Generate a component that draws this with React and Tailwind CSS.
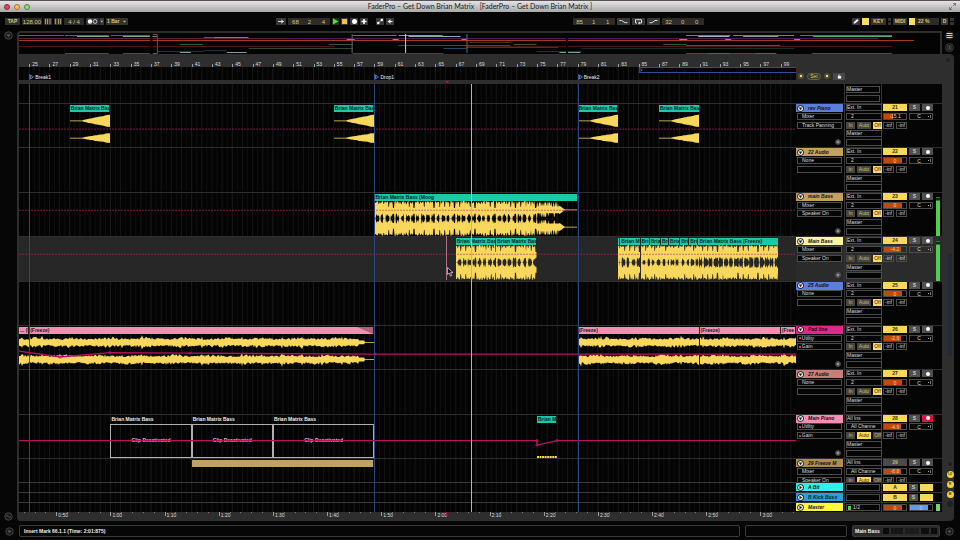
import React, { useState } from "react";
import clsx from "clsx";

const FIRST_BAR = 24;
const VISIBLE_BARS = 76.5;

function pos(bar) {
  return ((bar - FIRST_BAR) / VISIBLE_BARS) * 100 + "%";
}
function span(from, to) {
  return ((to - from) / VISIBLE_BARS) * 100 + "%";
}

function noise(i, seed) {
  const v = Math.sin(i * 12.9898 + seed * 78.233) * 43758.5453;
  return v - Math.floor(v);
}

// outline of one channel: up[] above the centre line, down[] below it
function outline(center, up, down, step) {
  const top = up.map((a, i) => `${(i * step).toFixed(1)},${(center - a).toFixed(1)}`);
  const bottom = down.map((a, i) => `${(i * step).toFixed(1)},${(center + a).toFixed(1)}`);
  return top.concat(bottom.reverse()).join(" ");
}

function swellWave(width) {
  const n = Math.floor(width);
  const make = (max) =>
    Array.from({ length: n + 1 }, (_, i) => {
      const t = i / n;
      return 0.4 + max * Math.pow(Math.max(0, t - 0.3) / 0.7, 0.9) * (0.85 + noise(i, 2) * 0.15);
    });
  return [outline(9, make(6.4), make(6.4), 1), outline(26.5, make(5), make(5), 1)];
}

function bassWave(width, seed, tail, sparse) {
  const n = Math.floor(width * 2);
  const outer = [];
  const inner = [];
  for (let i = 0; i <= n; i++) {
    const x = i / 2;
    const beat = x % 5.08;
    const phrase = x % 20.3;
    const k = Math.floor(x / 5.08);
    let o = 7.4 + noise(Math.floor(i / 2), seed) * 1.6;
    let n2 = 8.8;
    if (beat > 1.4 && beat < 2.1) {
      o = 5.6 + noise(k, seed + 7) * 2;
    }
    if (beat > (sparse ? 0.6 : 1.6) && beat < 4.2) {
      n2 = (sparse ? 2.6 : 3.6) + noise(i, seed + 4) * (sparse ? 3.4 : 3.8);
    }
    if (beat > 4.2) {
      o = noise(k, seed + 1) > 0.35 ? 3 : 6;
      n2 = noise(k, seed + 5) > 0.5 ? 8.8 : 6;
    }
    if (phrase > 18.8) {
      o = 1.8;
      n2 = 4;
    }
    if (tail && x > width - tail) {
      const t = (x - (width - tail)) / tail;
      o = t < 0.3 ? 4 * (1 - t / 0.3) + 0.5 : 0.4;
      n2 = o;
    } else if (tail && x > width - 40) {
      o = noise(i, seed) > 0.45 ? 7.5 : 3.5;
      n2 = noise(i, seed + 2) > 0.35 ? 3.5 : 7;
    }
    outer.push(o);
    inner.push(n2);
  }
  return [outline(9, outer, inner, 0.5), outline(26.5, inner, outer, 0.5)];
}

function padWave(width, seed, tail) {
  const n = Math.floor(width);
  const make = (s) =>
    Array.from({ length: n + 1 }, (_, i) => {
      if (tail && i > n - 10) return 0.4;
      if (tail && i > n - 16) return 2;
      const swell = 0.75 + 0.25 * Math.sin(i / 6 + s);
      const peak = i % 20 === 3 && noise(i, 9) > 0.5 ? 2.2 : 0;
      return 2.5 + swell * noise(i, s) * 3.2 + peak;
    });
  return [
    outline(8.5, make(seed), make(seed + 1), 1),
    outline(26, make(seed + 2), make(seed + 3), 1),
  ];
}

const TEAL = "bg-[#1bc8a8]";
const PINK = "bg-[#f48fb1]";

const tracks = [
  {
    id: 21,
    name: "rev Piano",
    color: "bg-[#5b7fdc]",
    device: "Mixer",
    param: "Track Panning",
    vol: "-15.1",
    fill: "w-2/5",
    add: true,
    dashed: 25.5,
    clips: [
      { from: 29, to: 33, label: "Brian Matrix Bas", color: TEAL, wave: "swell" },
      { from: 55, to: 59, label: "Brian Matrix Bas", color: TEAL, wave: "swell" },
      { from: 79, to: 83, label: "Brian Matrix Bas", color: TEAL, wave: "swell" },
      { from: 87, to: 91, label: "Brian Matrix Bas", color: TEAL, wave: "swell" },
    ],
  },
  { id: 22, name: "22 Audio", color: "bg-[#c4a05e]", device: "None", param: "", vol: "0", fill: "w-5/6", clips: [] },
  {
    id: 23,
    name: "main Bass",
    color: "bg-[#c4a05e]",
    device: "Mixer",
    param: "Speaker On",
    vol: "0",
    fill: "w-5/6",
    add: true,
    meter: true,
    dashed: 17.5,
    clips: [{ from: 59, to: 79, label: "Brian Matrix Bass (Moog", color: TEAL, wave: "bass", tail: 18 }],
  },
  {
    id: 24,
    name: "Main Bass",
    color: "bg-[#fdf3a0]",
    device: "Mixer",
    param: "Speaker On",
    vol: "-4.2",
    fill: "w-3/4",
    add: true,
    meter: true,
    selected: true,
    dashed: 17.5,
    clips: [
      { from: 67, to: 71, label: "Brian Matrix Bas", color: TEAL, wave: "bass" },
      { from: 71, to: 75, label: "Brian Matrix Bas", color: TEAL, wave: "bass" },
      { from: 83, to: 83.2, label: "", color: TEAL, wave: "bass" },
      { from: 83.2, to: 85.2, label: "Brian M", color: TEAL, wave: "bass" },
      { from: 85.2, to: 86.1, label: "Bri", color: TEAL, wave: "bass" },
      { from: 86.1, to: 87.2, label: "Bria", color: TEAL, wave: "bass" },
      { from: 87.2, to: 88, label: "Bri", color: TEAL, wave: "bass" },
      { from: 88, to: 89.1, label: "Bria", color: TEAL, wave: "bass" },
      { from: 89.1, to: 90, label: "Bri", color: TEAL, wave: "bass" },
      { from: 90, to: 90.9, label: "Bri", color: TEAL, wave: "bass" },
      { from: 90.9, to: 98.8, label: "Brian Matrix Bass (Freeze)", color: TEAL, wave: "bass", sparse: true },
    ],
  },
  { id: 25, name: "25 Audio", color: "bg-[#5b7fdc]", device: "None", param: "", vol: "0", fill: "w-5/6", clips: [] },
  {
    id: 26,
    name: "Pad line",
    color: "bg-[#e0278a]",
    device: "Utility",
    param: "Gain",
    automated: true,
    vol: "-2.9",
    fill: "w-3/4",
    add: true,
    line: [[0, 25.5], [41, 31.5], [91, 27], [171, 27.5], [356, 28.5], [777, 28.5]],
    clips: [
      { from: 24, to: 25, label: "... (F", color: PINK },
      { from: 25, to: 59, label: "(Freeze)", color: PINK, fade: true },
      { from: 24, to: 59, color: null, wave: "pad", tail: 10 },
      { from: 79, to: 91, label: "(Freeze)", color: PINK, wave: "pad" },
      { from: 91, to: 99, label: "(Freeze)", color: PINK, wave: "pad" },
      { from: 99, to: 100.5, label: "(Free", color: PINK, wave: "pad" },
    ],
  },
  { id: 27, name: "27 Audio", color: "bg-[#c97f77]", device: "None", param: "", vol: "0", fill: "w-5/6", clips: [] },
  {
    id: 28,
    name: "Main Piano",
    color: "bg-[#f48fb1]",
    device: "Utility",
    param: "Gain",
    automated: true,
    midi: true,
    armed: true,
    vol: "-4.9",
    fill: "w-3/4",
    add: true,
    line: [[0, 26], [518, 26], [518, 30.5], [538, 26], [777, 26]],
    clips: [
      { from: 33, to: 41, label: "Brian Matrix Bass", off: true },
      { from: 41, to: 49, label: "Brian Matrix Bass", off: true },
      { from: 49, to: 59, label: "Brian Matrix Bass", off: true },
      { from: 75, to: 77, label: "Brian M", color: TEAL, wave: "notes" },
    ],
  },
];

const freezeTrack = {
  id: 29,
  name: "29 Freeze M",
  color: "bg-[#b08c4c]",
  device: "Mixer",
  param: "Speaker On",
  midi: true,
  muted: true,
  vol: "-8.8",
  fill: "w-3/4",
  clips: [{ from: 41, to: 59, label: "", color: "bg-[#c3a067]" }],
};

const locators = [
  { bar: 25, name: "Break1" },
  { bar: 59, name: "Drop1" },
  { bar: 79, name: "Break2" },
];

function GridLines() {
  const lines = [];
  for (let b = 24.5; b < 100.5; b += 0.5) lines.push(b);
  return (
    <svg className="absolute inset-0 h-full w-full" aria-hidden="true">
      {lines.map((b) => (
        <line
          key={b}
          x1={pos(b)}
          x2={pos(b)}
          y1="0"
          y2="100%"
          stroke={b % 4 === 1 ? "#1c1c1c" : b % 1 === 0 ? "#161616" : "#0f0f0f"}
        />
      ))}
    </svg>
  );
}

function Wave({ clip }) {
  const width = (clip.to - clip.from) * 10.157;
  if (clip.wave === "notes") {
    return (
      <svg className="h-full w-full" viewBox="0 0 20 36" preserveAspectRatio="none">
        <path d="M0 34.5H20" stroke="#f7d75c" strokeWidth="2" strokeDasharray="2 .5" />
      </svg>
    );
  }
  let shapes = [];
  if (clip.wave === "swell") shapes = swellWave(width);
  if (clip.wave === "bass") shapes = bassWave(width, clip.from, clip.tail, clip.sparse);
  if (clip.wave === "pad") shapes = padWave(width, clip.from, clip.tail);
  return (
    <svg className="h-full w-full" viewBox={`0 0 ${width} 36`} preserveAspectRatio="none">
      {shapes.map((points, i) => (
        <polygon key={i} points={points} fill="#f7d75c" />
      ))}
    </svg>
  );
}

function Clip({ clip }) {
  return (
    <div
      className="absolute inset-y-0 flex flex-col pt-px"
      style={{ left: pos(clip.from), width: span(clip.from, clip.to) }}
    >
      <div
        className={clsx(
          "relative h-[7px] shrink-0 overflow-hidden whitespace-nowrap pl-px text-[5px] leading-[7px] font-bold",
          clip.color,
          clip.off ? "text-[#f0f0f0]" : "text-[#06251f]",
          clip.color && "border-r border-[#222]"
        )}
      >
        {clip.label}
        {clip.fade && (
          <svg className="absolute right-0 top-0 h-full w-4" viewBox="0 0 16 7" preserveAspectRatio="none">
            <path d="M0 0H16V7Z" fill="#b0607c" />
          </svg>
        )}
      </div>
      {clip.off ? (
        <div className="mt-px flex flex-1 items-center justify-center border border-[#b0b0b0] text-[5px] leading-none font-bold text-[#d9c4d0]">
          Clip Deactivated
        </div>
      ) : (
        <div className="min-h-0 flex-1">{clip.wave && <Wave clip={clip} />}</div>
      )}
    </div>
  );
}

function Lane({ track }) {
  return (
    <div
      className={clsx(
        "relative min-w-0 flex-1 overflow-hidden border-t border-[#2e2e2e]",
        track.selected ? "bg-[#272727]" : "bg-[#040404]"
      )}
    >
      {!track.selected && <GridLines />}
      {track.clips.map((c, i) => (
        <Clip key={i} clip={c} />
      ))}
      <svg className="absolute inset-0 h-full w-full" viewBox="0 0 777 44" preserveAspectRatio="none">
        {track.dashed && (
          <path
            d={`M0 ${track.dashed}H777`}
            stroke="#c4246a"
            strokeOpacity="0.6"
            strokeDasharray="2 1"
            vectorEffect="non-scaling-stroke"
          />
        )}
        {track.line && (
          <polyline
            points={track.line.map((p) => p.join(",")).join(" ")}
            fill="none"
            stroke="#b8125f"
            strokeWidth="1.4"
            vectorEffect="non-scaling-stroke"
          />
        )}
        {track.line &&
          track.line.slice(1, -1).map((p, i) => (
            <circle key={i} cx={p[0]} cy={p[1]} r="1.2" fill="none" stroke="#c2146a" strokeWidth="0.7" />
          ))}
      </svg>
    </div>
  );
}

function Pick({ label, value, automated, center }) {
  return (
    <span className="flex h-[7px] items-center border border-[#4a4a4a] bg-[#050505]">
      {automated && <span className="ml-px size-[2px] bg-[#e0206c]" />}
      <select
        aria-label={label}
        defaultValue={value}
        className={clsx(
          "h-[7px] w-full appearance-none bg-transparent py-0 pr-0 text-[5px] leading-none text-[#dedede] outline-none",
          automated ? "pl-px" : center ? "pl-1" : "pl-0"
        )}
      >
        <option>{value}</option>
      </select>
    </span>
  );
}

function Monitor({ active }) {
  return (
    <div className="flex h-[7px] gap-[2px]">
      {["In", "Auto", "Off"].map((m) => (
        <button
          key={m}
          type="button"
          className={clsx(
            "h-full text-center text-[5px] leading-[7px]",
            m === "Auto" ? "w-3.5" : "w-[9px]",
            active === m ? "bg-[#f7d75c] text-[#3a2e00]" : "bg-[#48463c] text-[#c9bb80]"
          )}
        >
          {m}
        </button>
      ))}
    </div>
  );
}

function Fold() {
  return (
    <svg className="size-[7px] shrink-0" viewBox="0 0 14 14" aria-hidden="true">
      <circle cx="7" cy="7" r="6.5" fill="#141414" />
      <circle cx="7" cy="7" r="5" fill="#e8e8e8" />
      <path d="M3.5 5H10.5L7 10.5Z" fill="#222" />
    </svg>
  );
}

function TrackControls({ track }) {
  const [active, setActive] = useState(!track.muted);
  const [solo, setSolo] = useState(false);
  return (
    <div
      className={clsx(
        "flex w-[146px] shrink-0 gap-px overflow-hidden border-t border-[#2e2e2e]",
        track.selected ? "bg-[#2b2b2b]" : "bg-[#050505]"
      )}
    >
      <div className="grid h-11 w-[47px] grid-rows-5">
        <div className={clsx("flex h-2 items-center gap-1 pl-px", track.color)}>
          <Fold />
          <span className="text-[5px] leading-none font-bold whitespace-nowrap text-[#10101a] italic">
            {track.name}
          </span>
        </div>
        <div className="px-px">
          <Pick label={track.name + " device"} value={track.device} automated={track.automated} center />
        </div>
        <div className="px-px">
          <Pick label={track.name + " parameter"} value={track.param} automated={track.automated} center />
        </div>
        <div />
        {track.add && (
          <button type="button" aria-label="Add automation lane" className="ml-auto mr-0.5 size-[6px]">
            <svg viewBox="0 0 12 12" className="size-full">
              <circle cx="6" cy="6" r="5" fill="#3a3a3a" stroke="#777" />
              <path d="M3 6H9M6 3V9" stroke="#ccc" strokeWidth="1.5" />
            </svg>
          </button>
        )}
      </div>
      <div className="grid h-11 w-[38px] grid-rows-5 border-x border-[#333] px-px">
        <Pick label={track.name + " input"} value={track.midi ? "All Ins" : "Ext. In"} />
        <Pick label={track.name + " channel"} value={track.midi ? "All Channe" : "2"} center />
        <Monitor active={track.midi ? "Auto" : "Off"} />
        <Pick label={track.name + " output"} value="Master" />
        <Pick label={track.name + " output channel"} value="" />
      </div>
      <div className="grid h-11 w-[52px] grid-rows-5">
        <div className="flex h-[7px] gap-0.5">
          <button
            type="button"
            onClick={() => setActive(!active)}
            className={clsx(
              "w-6 text-center text-[5px] leading-[7px] font-bold",
              active ? "bg-[#f7d75c] text-[#3a2e00]" : "bg-[#4a4a4a] text-[#c8b878]"
            )}
          >
            {track.id}
          </button>
          <button
            type="button"
            onClick={() => setSolo(!solo)}
            className={clsx(
              "w-[11px] text-center text-[5px] leading-[7px] font-bold",
              solo ? "bg-[#5b9be6] text-black" : "bg-[#505050] text-[#ccc]"
            )}
          >
            S
          </button>
          <button
            type="button"
            aria-label={"Arm " + track.name}
            className={clsx("flex w-[11px] items-center justify-center", track.armed ? "bg-[#dc143c]" : "bg-[#505050]")}
          >
            <span className="size-1 rounded-full bg-white" />
          </button>
        </div>
        <div className="flex h-[7px] gap-0.5">
          <div className="relative w-6 border border-[#4a4a4a]">
            <div className={clsx("h-full bg-[#c2490c]", track.fill)} />
            <input
              aria-label={track.name + " volume"}
              defaultValue={track.vol}
              className="absolute inset-0 h-full w-full bg-transparent text-center text-[5px] leading-none text-[#f0c9a0]"
            />
          </div>
          <div className="flex w-6 items-center border border-[#4a4a4a]">
            <input
              aria-label={track.name + " pan"}
              defaultValue="C"
              className="block h-full w-full min-w-0 bg-transparent text-center text-[5px] leading-none text-[#d8d8d8]"
            />
            <span className="size-px bg-[#aaa]" />
            <span className="mx-px h-[3px] w-px bg-[#777]" />
          </div>
        </div>
        <div className="flex h-[7px] gap-0.5">
          <span className="w-[11px] border border-[#4a4a4a] text-center text-[5px] leading-[5px] text-[#ddd]">-inf</span>
          <span className="w-[11px] border border-[#4a4a4a] text-center text-[5px] leading-[5px] text-[#ddd]">-inf</span>
        </div>
      </div>
      <div className="flex w-1 flex-col">
        {track.meter && (
          <>
            <div className="mt-1 h-1 border-y border-[#2b7a33] bg-[#0c2a10]" />
            <div className="flex-1 bg-[#4fcf52]" />
          </>
        )}
      </div>
    </div>
  );
}

function TrackRow({ track }) {
  return (
    <div className="flex min-h-0">
      <Lane track={track} />
      <TrackControls track={track} />
    </div>
  );
}

function BusRow({ name, color, letter, master }) {
  return (
    <div className="flex h-[10px]">
      <div className="relative flex-1 border-t border-[#3a3a3a] bg-[#040404]">
        <GridLines />
      </div>
      <div className="flex w-[146px] gap-px border-t border-[#333] bg-[#050505]">
        <div className={clsx("flex h-2 w-[47px] items-center gap-1 pl-px", color)}>
          <svg className="size-[7px] shrink-0" viewBox="0 0 14 14" aria-hidden="true">
            <circle cx="7" cy="7" r="6.5" fill="#141414" />
            <circle cx="7" cy="7" r="5" fill="#e8e8e8" />
            <path d="M5 3.5L10.5 7L5 10.5Z" fill="#222" />
          </svg>
          <span className="text-[5px] leading-none font-bold whitespace-nowrap text-[#102030] italic">{name}</span>
        </div>
        <div className="w-[38px] border-x border-[#333] px-px pt-px">
          {master ? (
            <span className="flex h-[7px] items-center gap-0.5 border border-[#4a4a4a] pl-px">
              <span className="h-1 w-[3px] bg-[#4fcf52]" />
              <span className="text-[5px] leading-none text-[#ddd]">1/2</span>
            </span>
          ) : (
            <Pick label={name + " output"} value="" />
          )}
        </div>
        <div className="flex h-2 w-[52px] gap-0.5 pt-px">
          {master ? (
            <>
              <div className="relative w-6 border border-[#4a4a4a]">
                <div className="h-full w-5/6 bg-[#c2490c]" />
                <input
                  aria-label="Master volume"
                  defaultValue="0"
                  className="absolute inset-0 h-full w-full text-center text-[5px] leading-none text-[#f0c9a0]"
                />
              </div>
              <div className="relative w-6 border border-[#4a4a4a]">
                <div className="h-full w-5/6 bg-[#5b9bf0]" />
                <input
                  aria-label="Cue volume"
                  defaultValue="0"
                  className="absolute inset-0 h-full w-full text-center text-[5px] leading-none text-[#bcd8ff]"
                />
              </div>
            </>
          ) : (
            <>
              <button type="button" className="w-6 bg-[#f7d75c] text-center text-[5px] leading-[7px] font-bold text-[#3a2e00]">
                {letter}
              </button>
              <button type="button" className="w-[9px] bg-[#505050] text-center text-[5px] leading-[7px] font-bold text-[#ccc]">
                S
              </button>
              <button type="button" aria-label={name + " post"} className="w-[13px] bg-[#f7d75c]" />
            </>
          )}
        </div>
        {master && <div className="mt-px h-[7px] w-1 bg-[#6fd96f]" />}
      </div>
    </div>
  );
}

function TButton({ label, className, children }) {
  return (
    <button
      type="button"
      aria-label={label}
      className={clsx(
        "flex h-[7px] items-center justify-center text-[5px] leading-none font-bold text-[#d9c574]",
        className
      )}
    >
      {children}
    </button>
  );
}

function Field({ label, values, className }) {
  return (
    <div className={clsx("flex h-[7px] items-center bg-[#2c2b27]", className)}>
      {values.map((v, i) => (
        <input
          key={i}
          aria-label={label + " " + (i + 1)}
          defaultValue={v}
          className="block h-[7px] min-w-0 flex-1 bg-transparent text-center text-[6px] leading-none text-[#d9c574]"
        />
      ))}
    </div>
  );
}

function Transport() {
  return (
    <div className="flex h-[19px] items-center bg-[#050505] pr-1.5 pl-[5px]">
      <div className="flex gap-0.5">
        <TButton className="w-[15px] bg-[#35332b]">TAP</TButton>
        <Field label="Tempo" values={["128.00"]} className="w-5" />
        <TButton label="Nudge down" className="w-2 bg-[#35332b]">
          <svg viewBox="0 0 8 7" className="h-full w-full">
            <path d="M1.5 1V6M3.5 1V6M6 1V6" stroke="#a8975a" />
          </svg>
        </TButton>
        <TButton label="Nudge up" className="w-2 bg-[#35332b]">
          <svg viewBox="0 0 8 7" className="h-full w-full">
            <path d="M1.5 1V6M4.5 1V6M6.5 1V6" stroke="#a8975a" />
          </svg>
        </TButton>
        <Field label="Time signature" values={["4 / 4"]} className="w-5" />
        <TButton label="Metronome" className="w-[18px] gap-px bg-[#383838]">
          <svg viewBox="0 0 18 7" className="h-full w-full">
            <circle cx="4" cy="3.5" r="2.2" fill="#fff" />
            <circle cx="9" cy="3.5" r="1.9" fill="none" stroke="#ddd" strokeWidth=".8" />
            <path d="M13 0V7" stroke="#111" />
            <path d="M14.6 2.7H17L15.8 4.5Z" fill="#ccc" />
          </svg>
        </TButton>
        <div className="flex h-[7px] w-[22px] items-center bg-[#35332b]">
          <select
            aria-label="Quantization"
            defaultValue="1 Bar"
            className="h-[7px] w-4 appearance-none bg-transparent p-0 pl-px text-[5px] leading-none font-bold text-[#d9c574]"
          >
            <option>1 Bar</option>
          </select>
          <svg viewBox="0 0 5 7" className="h-full w-[5px]">
            <path d="M1 2.7H4L2.5 4.5Z" fill="#bbb" />
          </svg>
        </div>
      </div>
      <div className="grow-5" />
      <div className="flex gap-0.5">
        <TButton label="Follow" className="w-[10px] bg-[#383838]">
          <svg viewBox="0 0 10 7" className="h-full w-full">
            <path d="M2 3.5H7M5 1.8L7.5 3.5L5 5.2" stroke="#eee" fill="none" strokeWidth=".9" />
          </svg>
        </TButton>
        <Field label="Position" values={["68", "2", "4"]} className="w-[42px]" />
        <TButton label="Play" className="w-[7px] bg-[#22351c]">
          <svg viewBox="0 0 7 7" className="h-full w-full">
            <path d="M1 .5L6.5 3.5L1 6.5Z" fill="#4fe32c" />
          </svg>
        </TButton>
        <TButton label="Stop" className="w-[7px] bg-[#383838]">
          <span className="size-[5px] bg-[#f0c04c]" />
        </TButton>
        <TButton label="Record" className="w-2 bg-[#383838]">
          <span className="size-[5px] rounded-full bg-white" />
        </TButton>
        <TButton label="Overdub" className="w-2 bg-[#383838]">
          <svg viewBox="0 0 8 7" className="h-full w-full">
            <path d="M1.5 3.5H6.5M4 1V6" stroke="#fff" strokeWidth="1.6" />
          </svg>
        </TButton>
        <TButton label="Automation arm" className="ml-1.5 w-2 bg-[#383838]">
          <svg viewBox="0 0 8 7" className="h-full w-full">
            <path d="M2 5.2L6 1.8" stroke="#bbb" strokeWidth=".7" />
            <circle cx="2.3" cy="5" r="1.2" fill="#fff" />
            <circle cx="5.8" cy="2" r="1.2" fill="#fff" />
          </svg>
        </TButton>
        <TButton label="Back to arrangement" className="w-2 bg-[#383838]">
          <svg viewBox="0 0 8 7" className="h-full w-full">
            <path d="M1.5 3.5L4.5 1.3V5.7ZM4 3H6.5V4H4Z" fill="#eee" />
          </svg>
        </TButton>
      </div>
      <div className="grow-6" />
      <div className="flex gap-0.5">
        <Field label="Loop start" values={["85", "1", "1"]} className="w-[42px]" />
        <TButton label="Punch in" className="w-[13px] bg-[#383838]">
          <svg viewBox="0 0 13 7" className="h-full w-full">
            <path d="M2.5 2.5H4.5L8 4.7H10.5" stroke="#ddd" fill="none" />
          </svg>
        </TButton>
        <TButton label="Loop" className="w-[13px] bg-[#383838]">
          <svg viewBox="0 0 13 7" className="h-full w-full">
            <path d="M5 5H3.5V1.7H9.5V5H7" stroke="#ddd" fill="none" />
            <path d="M7.8 3.4V6.6L5.8 5Z" fill="#ddd" />
          </svg>
        </TButton>
        <TButton label="Punch out" className="w-[13px] bg-[#383838]">
          <svg viewBox="0 0 13 7" className="h-full w-full">
            <path d="M2.5 4.7H5L8 2.5H10.5" stroke="#ddd" fill="none" />
          </svg>
        </TButton>
        <Field label="Loop length" values={["32", "0", "0"]} className="w-[42px]" />
      </div>
      <div className="grow-5" />
      <div className="flex gap-0.5">
        <TButton label="Draw mode" className="w-2 bg-[#383838]">
          <svg viewBox="0 0 8 7" className="h-full w-full">
            <path d="M1.5 5.8L2 4L5.2 1L6.7 2.4L3.4 5.3Z" fill="#f4f4f4" />
          </svg>
        </TButton>
        <TButton label="Computer keyboard" className="w-[7px] bg-[#f9dc63]" />
        <TButton className="w-[15px] bg-[#35332b]">KEY</TButton>
        <span className="flex w-[3px] flex-col justify-between">
          <span className="h-[3px] bg-[#333]" />
          <span className="h-[3px] bg-[#333]" />
        </span>
        <TButton className="w-3.5 bg-[#35332b]">MIDI</TButton>
        <div className="flex h-[7px] w-[30px] bg-[#2c2b27] text-[5px] leading-[7px] font-bold text-[#d9c574]">
          <span className="mr-[3px] w-1.5 bg-[#f9dc63]" />
          22 %
        </div>
        <TButton className="w-[7px] bg-[#383838] text-[#ccc]">D</TButton>
        <span className="flex w-1 flex-col justify-between">
          <span className="h-[3px] bg-[#333]" />
          <span className="h-[3px] bg-[#333]" />
        </span>
      </div>
    </div>
  );
}

const overviewLines = [
  // [x1, x2, y, colour]
  [0, 45, 2, "#2f7a46"], [46, 90, 2, "#2f7a46"], [58, 90, 3, "#7fae8c"], [92, 131, 2, "#2f7a46"],
  [104, 131, 3, "#7fae8c"], [133, 138, 3, "#8a8a8a"], [334, 378, 2, "#4a70b4"], [380, 424, 2, "#6f9fae"],
  [390, 442, 3, "#8ab0b8"], [185, 230, 4, "#3c4f9a"], [196, 229, 4, "#6c7cc0"], [668, 712, 2, "#5a7fae"],
  [680, 711, 3, "#9ab8b0"], [715, 776, 2, "#5a8a8e"], [725, 760, 3, "#8a9a9a"], [782, 874, 2, "#2f8a56"],
  [795, 874, 3, "#4fae76"], [0, 270, 5, "#5a1f4a"], [270, 860, 5, "#4a1c5a"], [328, 336, 6, "#6a8fe0"],
  [374, 380, 6, "#6a8fe0"], [443, 448, 6, "#6a8fe0"], [661, 669, 6, "#6a8fe0"], [707, 713, 6, "#6a8fe0"],
  [776, 782, 6, "#6a8fe0"], [0, 896, 7, "#a8381c"], [161, 184, 11, "#265c40"], [310, 334, 11, "#265c40"],
  [451, 494, 9, "#3a3214"], [645, 668, 11, "#265c40"], [495, 518, 11, "#3c5c26"], [380, 492, 12, "#1c5a44"],
  [668, 762, 12, "#1f6a48"], [0, 316, 13, "#541212"], [448, 563, 13, "#4a1414"], [563, 874, 13, "#501414"],
  [230, 334, 15, "#2f4a34"], [448, 540, 14, "#20403c"], [425, 448, 15, "#1f4a6a"], [138, 185, 18, "#1c3448"],
  [185, 208, 17, "#1c3448"], [161, 172, 19, "#8aa0a0"], [208, 228, 19, "#8aa0a0"], [518, 563, 18, "#183c38"],
  [541, 562, 19, "#7aa0a0"], [563, 776, 15, "#123028"], [334, 425, 20, "#444"], [46, 90, 20, "#4a4a4a"],
  [104, 131, 20, "#4a4a4a"], [668, 758, 20, "#2a5a48"], [690, 711, 20, "#606060"], [737, 758, 20, "#606060"],
  [794, 874, 20, "#4a4a4a"],
];

function Overview() {
  return (
    <div className="flex">
      <div className="h-[23px] flex-1 rounded-tl-sm border-x-2 border-t-2 border-[#2e2e2e] bg-[#040404]">
        <svg className="block h-[21px] w-full" viewBox="0 0 922 21" preserveAspectRatio="none">
          {overviewLines.map(([x1, x2, y, c], i) => (
            <path key={i} d={`M${x1} ${y + 0.5}H${x2}`} stroke={c} />
          ))}
          <path d="M132.5 0V21M548.5 0V21" stroke="#000" strokeWidth="2" />
          <path d="M134 1.5H138.5V20.5H134" stroke="#5a5a5a" fill="none" />
          <path d="M333.5 1V20M448.5 1V20" stroke="#6a6a6a" />
          <path d="M387 1V20" stroke="#d0d0d0" />
        </svg>
      </div>
      <div className="flex w-3 flex-col items-end justify-between pb-0.5">
        <button type="button" aria-label="Arrangement view" className="size-[9px]">
          <svg viewBox="0 0 18 18" className="size-full">
            <circle cx="9" cy="9" r="8.5" fill="#2a2a1c" />
            <path d="M3 5H15M3 9H15M3 13H15" stroke="#e8cf58" strokeWidth="2.4" />
          </svg>
        </button>
        <button type="button" aria-label="Session view" className="size-[9px]">
          <svg viewBox="0 0 18 18" className="size-full">
            <circle cx="9" cy="9" r="8" fill="#151515" stroke="#444" strokeWidth="1.5" />
            <path d="M6 4V14M9 4V14M12 4V14" stroke="#555" strokeWidth="1.6" />
          </svg>
        </button>
      </div>
    </div>
  );
}

function BeatRuler() {
  const bars = [];
  for (let b = 25; b < 100; b += 2) bars.push(b);
  return (
    <div className="relative h-[13px] flex-1 overflow-hidden bg-[#2e2e2e] text-[5px] leading-none text-[#dcdcdc]">
      {bars.map((b) => (
        <span key={b} className="absolute bottom-0 flex items-end gap-0.5" style={{ left: pos(b) }}>
          <span className="h-[3px] w-px bg-[#9a9a9a]" />
          {b}
        </span>
      ))}
    </div>
  );
}

function TimeRuler() {
  const marks = [];
  for (let k = 5; k <= 18; k++) {
    marks.push({ bar: 33 + (k - 6) * 5.333, text: Math.floor(k / 6) + ":" + (k % 6) + "0" });
  }
  const minor = [];
  for (let s = 44; s < 187; s += 2) minor.push(33 + (s - 60) * 0.5333);
  return (
    <div className="relative h-[9px] flex-1 overflow-hidden bg-[#2e2e2e] text-[5px] leading-none text-[#dcdcdc]">
      {minor.map((b) => (
        <span key={b} className="absolute top-0 h-px w-px bg-[#777]" style={{ left: pos(b) }} />
      ))}
      {marks.map((m) => (
        <span key={m.text} className="absolute top-0 flex items-start gap-px" style={{ left: pos(m.bar) }}>
          <span className="h-1 w-px bg-[#9a9a9a]" />
          <span className="pt-px">{m.text}</span>
        </span>
      ))}
      <span className="absolute top-0 h-1 w-px bg-[#d01440]" style={{ left: pos(66) }} />
    </div>
  );
}

function LocatorRow() {
  return (
    <div className="flex">
      <div className="min-w-0 flex-1">
        <div className="relative h-[13px] overflow-hidden bg-[#040404]">
          <GridLines />
          <div
            className="absolute top-0 right-0 h-[6px] border-y border-[#2c4f96] bg-[#050505]"
            style={{ left: pos(85) }}
          >
            <svg viewBox="0 0 6 6" className="block h-1 w-1">
              <path d="M.5 .5L5 3L.5 5.5Z" fill="none" stroke="#4a78d0" />
            </svg>
          </div>
          {locators.map((l) => (
            <div key={l.bar} className="absolute bottom-0 flex h-[6px] items-center" style={{ left: pos(l.bar) }}>
              <span className="h-full w-px bg-[#36569c]" />
              <svg viewBox="0 0 4 6" className="h-[6px] w-1">
                <path d="M.5 1L3.5 3L.5 5Z" fill="#14203c" stroke="#6a8cd0" strokeWidth=".8" />
              </svg>
              <span className="pl-px text-[5px] leading-none text-[#eee]">{l.name}</span>
            </div>
          ))}
        </div>
        <div className="relative h-1 bg-[#2e2e2e]">
          <svg viewBox="0 0 4 2" className="absolute top-px -ml-0.5 h-0.5 w-1" style={{ left: pos(66.1) }}>
            <path d="M0 0H4L2 2Z" fill="#d01440" />
          </svg>
        </div>
      </div>
      <div className="flex w-[146px] items-center gap-[3px] pt-px pl-0.5">
        <button type="button" aria-label="Previous locator" className="flex size-[6px] items-center justify-center rounded-full bg-[#55512f]">
          <span className="size-0.5 bg-[#e8dca0]" />
        </button>
        <button type="button" className="h-[7px] w-3.5 rounded-full border border-[#6a6440] bg-[#3a3828] text-center text-[5px] leading-[5px] text-[#d9c574]">
          Set
        </button>
        <button type="button" aria-label="Next locator" className="flex size-[6px] items-center justify-center rounded-full bg-[#55512f]">
          <span className="size-0.5 bg-[#e8dca0]" />
        </button>
        <button type="button" aria-label="Lock envelopes" className="flex h-[7px] w-3 items-center justify-center bg-[#484848]">
          <svg viewBox="0 0 6 6" className="size-[5px]">
            <path d="M1 2.5H5V5.5H1Z" fill="#fff" />
            <path d="M2 2.5V1.2H4" stroke="#fff" strokeWidth=".8" fill="none" />
          </svg>
        </button>
      </div>
    </div>
  );
}

function PartialTrack() {
  return (
    <div className="flex h-[19px]">
      <div className="relative flex-1 bg-[#040404]">
        <GridLines />
      </div>
      <div className="flex w-[146px] gap-px bg-[#050505]">
        <div className="w-[47px]" />
        <div className="flex w-[38px] flex-col gap-0.5 border-x border-[#333] px-px pt-0.5">
          <Pick label="Track output" value="Master" />
          <Pick label="Track output channel" value="" />
        </div>
      </div>
    </div>
  );
}

function Gutter() {
  return (
    <div className="flex w-3 shrink-0 flex-col items-center">
      <span className="mt-1 size-1 rounded-full bg-[#222]" />
      <div className="mt-[191px] ml-1 h-[103px] w-1 bg-[#232a33]" />
      <div className="mt-auto mb-3.5 ml-1 flex flex-col items-center gap-[3px]">
        <span className="mb-0.5 size-1 rounded-full bg-[#202020]" />
        {["I-O", "R", "M"].map((t) => (
          <button key={t} type="button" className="size-[7px] rounded-full bg-[#f0d43c] text-center text-[3px] leading-[7px] font-bold text-[#332b00]">
            {t}
          </button>
        ))}
        <span className="size-[6px] rounded-full bg-[#202020]" />
      </div>
    </div>
  );
}

function RoundIcon({ label, d }) {
  return (
    <button type="button" aria-label={label} className="size-[9px] shrink-0">
      <svg viewBox="0 0 18 18" className="size-full">
        <circle cx="9" cy="9" r="7.5" fill="#1a1a1a" stroke="#444" strokeWidth="2" />
        <path d={d} fill="#555" />
      </svg>
    </button>
  );
}

export default function App() {
  return (
    <div className="w-full overflow-hidden bg-[#060606] font-['Liberation_Sans',Arial,sans-serif]">
      <header className="relative flex h-3 items-center justify-center border-t border-[#5a5258] bg-linear-to-b from-[#e4e4e4] to-[#a9a9a9]">
        <div className="absolute left-1 flex gap-1">
          <button type="button" aria-label="Close" className="size-[6px] rounded-full border border-[#8f2530] bg-[#e4475a]" />
          <button type="button" aria-label="Minimize" className="size-[6px] rounded-full border border-[#a8742c] bg-[#f5c062]" />
          <button type="button" aria-label="Zoom" className="size-[6px] rounded-full border border-[#4c8a34] bg-[#9ad67a]" />
        </div>
        <h1 className="font-['Lato',sans-serif] text-[7px] leading-none whitespace-pre text-[#1a1a1a]">
          {"FaderPro – Get Down Brian Matrix   [FaderPro – Get Down Brian Matrix ]"}
        </h1>
        <button type="button" aria-label="Full screen" className="absolute right-1 size-[7px]">
          <svg viewBox="0 0 14 14" className="size-full">
            <path d="M8 1H13V6M13 1L8 6M6 13H1V8M1 13L6 8" stroke="#666" strokeWidth="1.6" fill="none" />
          </svg>
        </button>
      </header>

      <Transport />

      <div className="flex pr-1.5">
        <div className="flex w-[17px] shrink-0 flex-col items-center justify-between">
          <RoundIcon label="Show browser" d="M5 6.5H13L9 13Z" />
          <RoundIcon label="Groove pool" d="M4 8Q7 4 9 8T14 8V10Q11 14 9 10T4 10Z" />
        </div>
        <main className="min-w-0 flex-1">
          <Overview />
          <div className="flex rounded-tr-sm rounded-b-sm bg-[#2e2e2e] pl-0.5">
            <div className="min-w-0 flex-1">
              <div className="flex">
                <BeatRuler />
                <div className="w-[146px]" />
              </div>
              <LocatorRow />
              <div className="relative">
                <PartialTrack />
                <div className="grid h-[355px] auto-rows-fr">
                  {tracks.map((t) => (
                    <TrackRow key={t.id} track={t} />
                  ))}
                </div>
                <div className="grid h-6">
                  <TrackRow track={freezeTrack} />
                </div>
                <BusRow name="A Bit" color="bg-[#2ff0ec]" letter="A" />
                <BusRow name="B Kick Buss" color="bg-[#2a9fd8]" letter="B" />
                <BusRow name="Master" color="bg-[#fdf83c]" master />
                <div className="pointer-events-none absolute inset-y-0 right-[146px] left-0">
                  {locators.map((l) => (
                    <div key={l.bar} className="absolute inset-y-0 w-px bg-[#2b4584]" style={{ left: pos(l.bar) }} />
                  ))}
                  <div className="absolute inset-y-0 w-px bg-[#b4b4b4]" style={{ left: pos(68.5) }} />
                  <div className="absolute top-[152px] h-11 w-px bg-[#b07088]" style={{ left: pos(66) }} />
                  <svg className="absolute top-[183px] h-[10px] w-[7px]" viewBox="0 0 7 10" style={{ left: pos(66.1) }}>
                    <path d="M.5 .5V7.5L2.2 6L3.6 9.2L4.8 8.6L3.5 5.6H6Z" fill="#111" stroke="#ddd" strokeWidth=".7" />
                  </svg>
                </div>
              </div>
              <div className="flex">
                <TimeRuler />
                <div className="w-[146px]" />
              </div>
            </div>
            <Gutter />
          </div>
        </main>
      </div>

      <footer className="my-1 flex h-3 items-center gap-[5px] pr-1.5 pl-[5px]">
        <RoundIcon label="Show help" d="M7 5L13 9L7 13Z" />
        <div className="h-full flex-1 rounded-xs border border-[#3a3a3a] px-1 text-[5px] leading-[10px] font-bold text-[#f0f0f0]">
          Insert Mark 66.1.1 (Time: 2:01:875)
        </div>
        <div className="h-full w-[102px] rounded-xs border border-[#3a3a3a]" />
        <div className="flex h-full w-[88px] items-center gap-0.5 rounded-xs border border-[#3a3a3a] bg-[#2a2a2a] px-0.5 text-[5px] leading-none font-bold text-[#f0f0f0]">
          <span className="flex-1">Main Bass</span>
          <span className="h-[6px] w-1.5 bg-[#0a0a0a]" />
          <span className="h-[6px] w-3 bg-[#161616]" />
          <span className="h-[6px] w-3.5 bg-[#1c1c1c]" />
          <span className="h-[6px] w-2 bg-[#0e0e0e]" />
          <span className="h-[6px] w-1.5 bg-[#0a0a0a]" />
        </div>
        <RoundIcon label="Hide devices" d="M11 5L5 9L11 13Z" />
      </footer>
    </div>
  );
}
